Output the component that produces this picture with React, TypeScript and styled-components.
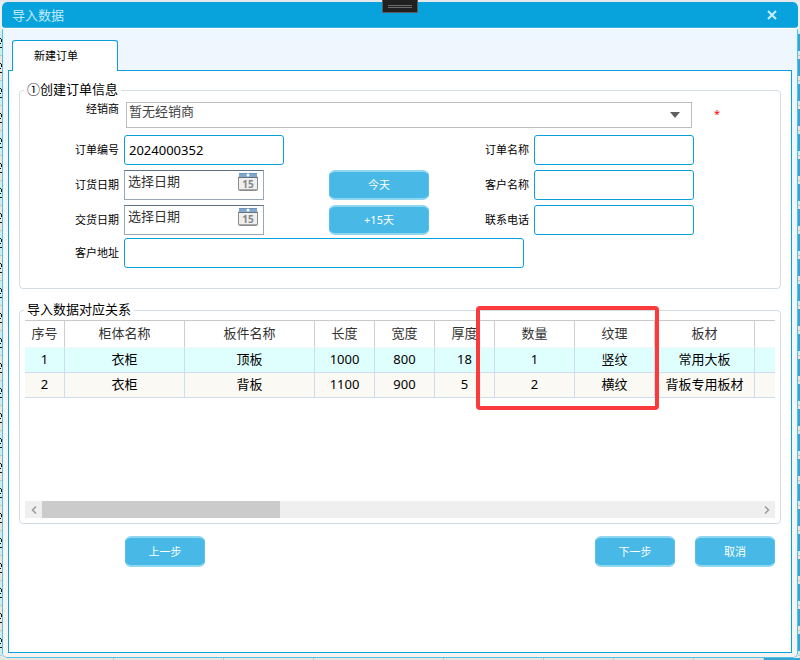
import React from "react";
import styled, { createGlobalStyle } from "styled-components";

const GlobalStyle = createGlobalStyle`
  *, *::before, *::after { box-sizing: border-box; }
  body {
    margin: 0;
    background: #e8e4dc;
    color: #000;
    font-family: "Noto Sans", "Noto Sans CJK SC", sans-serif;
    font-size: 13px;
  }
  button, input, select { font-family: inherit; margin: 0; }
  button { cursor: pointer; }
`;

const Desktop = styled.div`
  position: relative;
  display: grid;
  grid-template-columns: 2px minmax(0, 1fr) 2px;
  grid-template-rows: minmax(0, 1fr) 2px;
  height: 100vh;
  min-height: 600px;
  padding-top: 2px;
  background: #e6e8ec;
  overflow: hidden;
`;

const EdgeStrip = styled.div`
  padding-top: 29px;
  overflow: hidden;
  background: #f0eff0;
`;

const EdgeRow = styled.div<{ $tinted: boolean }>`
  display: flex;
  height: 25px;
  overflow: hidden;
  border-bottom: 1px solid #c4c6c6;
  background: ${(p) => (p.$tinted ? "#cdeeee" : "#ece6dc")};
`;

const EdgeMark = styled.svg`
  display: block;
  margin-top: 7px;
`;

const EdgeBlock = styled.span`
  width: 100%;
  height: 17px;
  margin-top: 3px;
  background: #35a5d5;
`;

const BottomStrip = styled.div`
  grid-column: 1 / -1;
  display: grid;
  grid-template-columns: 114fr 110fr 90fr 130fr 100fr 70fr 80fr 70fr 36fr;
  background: #e9e5dc;
`;

const BottomCell = styled.span`
  border-right: 1px solid #c6c4c4;
  &:last-child { border: 0; background: #35a5d5; }
`;

const DockHandle = styled.div`
  position: absolute;
  top: 0;
  left: calc(50% - 18px);
  width: 36px;
  height: 13px;
  padding: 5px;
  border: 1px solid #5c5c5c;
  border-top: 0;
  background: #202020;

  &::before {
    content: "";
    display: block;
    height: 3px;
    border: 1px solid #6b6b6b;
    border-width: 1px 0;
  }
`;

const Window = styled.main`
  display: flex;
  flex-direction: column;
  min-width: 0;
  border-radius: 5px;
  overflow: hidden;
  background: #fff;
`;

const TitleBar = styled.header`
  display: flex;
  align-items: center;
  justify-content: space-between;
  height: 26px;
  flex: none;
  padding: 0 20px 0 10px;
  border-bottom: 1px solid #3cb5e1;
  border-radius: 5px 5px 3px 3px;
  background: #08a3dc;
  color: #c3ecfb;
`;

const Title = styled.h1`
  margin: 0;
  font-size: 13px;
  font-weight: 400;
  line-height: 24px;
`;

const CloseButton = styled.button`
  display: flex;
  padding: 0;
  border: 0;
  background: none;
  color: #c9eefb;
`;

const WindowBody = styled.div`
  display: flex;
  flex: 1;
  flex-direction: column;
  min-height: 0;
  margin-top: 1px;
  padding: 11px 5px 4px;
  border: 1px solid #55bfe6;
  border-top: 0;
  border-radius: 0 0 5px 5px;
  background: linear-gradient(#eef6ff, #f4f6f8 50%, #f5f4f1);
`;

const TabList = styled.div`
  display: flex;
  padding-left: 4px;
`;

const Tab = styled.button`
  position: relative;
  height: 31px;
  margin-bottom: -1px;
  padding: 0 39px 0 21px;
  border: 1px solid #0aa0da;
  border-bottom: 0;
  border-radius: 3px 3px 0 0;
  background: #fff;
  color: #000;
  font-size: 11px;
  line-height: 30px;
`;

const TabPanel = styled.section`
  display: flex;
  flex: 1;
  flex-direction: column;
  gap: 12px;
  min-height: 0;
  padding: 10px;
  border: 1px solid #0aa0da;
  background: #fff;
`;

const Group = styled.fieldset`
  position: relative;
  min-width: 0;
  margin: 0;
  padding: 0;
  border: 1px solid #d3dde6;
  border-radius: 4px;
`;

const Legend = styled.legend`
  height: 18px;
  margin-left: 4px;
  padding: 0 3px;
  font-size: 13px;
  line-height: 16px;
`;

const FormGrid = styled.div`
  display: grid;
  grid-template-columns: 99px minmax(0, 200fr) 100px 95px minmax(0, 160fr) 81px;
  grid-template-rows: 33px 35px 35px 33px 30px;
  column-gap: 5px;
  align-items: start;
  padding: 3px 0 20px;
`;

const FieldLabel = styled.label<{ $col: number; $compact?: boolean }>`
  grid-column: ${(p) => p.$col};
  font-size: 11px;
  line-height: ${(p) => (p.$compact ? 14 : 30)}px;
  text-align: right;
  white-space: nowrap;
`;

const TextInput = styled.input<{ $cols?: string; $width?: string }>`
  grid-column: ${(p) => p.$cols ?? "auto"};
  width: ${(p) => p.$width ?? "100%"};
  height: 30px;
  padding: 0 4px;
  border: 1px solid #0aa0da;
  border-radius: 3px;
  outline: 0;
  background: #fff;
  color: #000;
  font-size: 13px;
`;

const SelectBox = styled.div`
  position: relative;
  grid-column: 2 / 6;
  margin: 0 2px;
`;

const Select = styled.select`
  display: block;
  width: 100%;
  height: 26px;
  padding: 0 30px 8px 2px;
  border: 1px solid #bdbdbd;
  border-radius: 0;
  outline: 0;
  appearance: none;
  background: #fff;
  color: #444;
  font-size: 13px;
  line-height: 16px;
`;

const SelectArrow = styled.svg`
  position: absolute;
  top: 10px;
  right: 12px;
  pointer-events: none;
`;

const Required = styled.span`
  padding-left: 15px;
  color: #f00;
  font-size: 11px;
  line-height: 24px;
`;

const DateBox = styled.div`
  display: flex;
  align-items: flex-start;
  width: 70%;
  height: 30px;
  padding: 1px 5px 0 3px;
  border: 1px solid #9aa7b4;
  border-top-color: #5f7182;
  background: #fff;
`;

const DateInput = styled.input`
  flex: 1;
  min-width: 0;
  height: 18px;
  padding: 0;
  border: 0;
  outline: 0;
  background: none;
  color: #333;
  font-size: 13px;
  &::placeholder { color: #333; opacity: 1; }
`;

const CalendarButton = styled.button`
  display: flex;
  padding: 0;
  border: 0;
  background: none;
`;

const ActionButton = styled.button<{ $wide?: boolean }>`
  width: ${(p) => (p.$wide ? 100 : 80)}px;
  height: ${(p) => (p.$wide ? 30 : 31)}px;
  padding: 0;
  border: 1px solid #6fcaec;
  border-width: 2px 1px;
  border-color: #8fd6f1 #58bfe8;
  border-radius: 6px;
  background: #48b9e7;
  color: #fff;
  font-size: 11px;
  line-height: 26px;
`;

const TableView = styled.div`
  min-height: 181px;
  margin: 1px 5px 0;
  overflow: hidden;
`;

const Table = styled.table`
  width: 100%;
  table-layout: fixed;
  border-collapse: separate;
  border-spacing: 0;
  font-size: 13px;
  text-align: center;
`;

const HeadCell = styled.th`
  height: 28px;
  padding: 0;
  border-top: 1px solid #c9c9c9;
  border-right: 1px solid #cfcfcf;
  border-bottom: 1px solid #f0f8f8;
  color: #333;
  font-weight: 400;
  line-height: 24px;
  vertical-align: top;
  white-space: nowrap;
  &:last-child { border-right: 0; }
`;

const BodyRow = styled.tr<{ $selected: boolean }>`
  background: ${(p) => (p.$selected ? "#dfffff" : "#fbf9f3")};
`;

const BodyCell = styled.td`
  height: 25px;
  padding: 0;
  border-right: 1px solid #cfdcee;
  border-bottom: 1px solid #cfdcee;
  line-height: 22px;
  vertical-align: top;
  white-space: nowrap;
  &:last-child { border-right: 0; }
`;

const ScrollBar = styled.div`
  display: flex;
  height: 17px;
  margin: 0 5px 5px;
  background: #efefef;
`;

const ScrollButton = styled.button`
  display: flex;
  align-items: center;
  justify-content: center;
  width: 17px;
  padding: 0;
  border: 0;
  background: none;
  color: #999;
`;

const ScrollTrack = styled.div`
  flex: 1;
`;

const ScrollThumb = styled.div`
  width: 33.3%;
  height: 100%;
  background: #cbcbcb;
`;

const Highlight = styled.div`
  position: absolute;
  top: -13px;
  left: 60%;
  width: 183px;
  height: 104px;
  border: 4px solid #fb3a3c;
  border-radius: 4px;
  pointer-events: none;
`;

const Footer = styled.footer`
  display: flex;
  gap: 20px;
  padding: 0 6px 0 106px;
`;

const Spacer = styled.span`
  flex: 1;
`;

const CalendarIcon = () => (
  <svg width="20" height="19" viewBox="0 0 20 19" aria-hidden="true">
    <rect x="0.5" y="4.5" width="19" height="14" rx="1" fill="#efefef" stroke="#8b8b8b" />
    <path d="M1 17.5h18" stroke="#a8a8a8" />
    <rect x="1" y="1" width="18" height="4" fill="#7fa9d1" />
    <path d="M0.5 5.5h19" stroke="#6c7378" />
    <path d="M1 1.5h18" stroke="#6d94b8" />
    <circle cx="10" cy="3" r="1.5" fill="#fff" />
    <text x="10" y="16" textAnchor="middle" fontFamily="Noto Sans" fontWeight="700" fontSize="10" fill="#858585">15</text>
  </svg>
);

const COLUMNS = [
  { title: "序号", width: 40 },
  { title: "柜体名称", width: 120 },
  { title: "板件名称", width: 130 },
  { title: "长度", width: 60 },
  { title: "宽度", width: 60 },
  { title: "厚度", width: 60 },
  { title: "数量", width: 80 },
  { title: "纹理", width: 80 },
  { title: "板材", width: 100 },
  { title: "", width: 20 },
];

const ROWS = [
  ["1", "衣柜", "顶板", "1000", "800", "18", "1", "竖纹", "常用大板", ""],
  ["2", "衣柜", "背板", "1100", "900", "5", "2", "横纹", "背板专用板材", ""],
];

const EDGE_ROWS = Array.from({ length: 40 }, (_, i) => i);

function DateField({ id, label }: { id: string; label: string }) {
  return (
    <>
      <FieldLabel $col={1} htmlFor={id}>{label}</FieldLabel>
      <DateBox>
        <DateInput id={id} placeholder="选择日期" />
        <CalendarButton type="button" aria-label={label}><CalendarIcon /></CalendarButton>
      </DateBox>
    </>
  );
}

export default function App() {
  return (
    <>
      <GlobalStyle />
      <Desktop>
        <EdgeStrip aria-hidden="true">
          {EDGE_ROWS.map((i) => (
            <EdgeRow key={i} $tinted={i % 2 === 0}>
              <EdgeMark width="2" height="10" viewBox="0 0 2 10">
                <path d="M0 0.5h1M1.5 1v3M0 5.5h1M0 9.5h2" fill="none" stroke="#111" />
              </EdgeMark>
            </EdgeRow>
          ))}
        </EdgeStrip>

        <Window>
          <TitleBar>
            <Title>导入数据</Title>
            <CloseButton type="button" aria-label="关闭">
              <svg width="12" height="10" viewBox="0 0 12 10" aria-hidden="true">
                <path d="M2 1l8 8M10 1L2 9" stroke="currentColor" strokeWidth="2" />
              </svg>
            </CloseButton>
          </TitleBar>

          <WindowBody>
            <TabList role="tablist">
              <Tab type="button" role="tab" aria-selected="true">新建订单</Tab>
            </TabList>

            <TabPanel role="tabpanel">
              <Group>
                <Legend>①创建订单信息</Legend>
                <FormGrid>
                  <FieldLabel $col={1} $compact htmlFor="dealer">经销商</FieldLabel>
                  <SelectBox>
                    <Select id="dealer" defaultValue="none">
                      <option value="none">暂无经销商</option>
                    </Select>
                    <SelectArrow width="10" height="6" viewBox="0 0 10 6" aria-hidden="true">
                      <path d="M0 0h10L5 6z" fill="#606060" />
                    </SelectArrow>
                  </SelectBox>
                  <Required>*</Required>

                  <FieldLabel $col={1} htmlFor="orderNo">订单编号</FieldLabel>
                  <TextInput id="orderNo" $width="80%" defaultValue="2024000352" />
                  <FieldLabel $col={4} htmlFor="orderName">订单名称</FieldLabel>
                  <TextInput id="orderName" />

                  <DateField id="orderDate" label="订货日期" />
                  <ActionButton type="button" $wide>今天</ActionButton>
                  <FieldLabel $col={4} htmlFor="customer">客户名称</FieldLabel>
                  <TextInput id="customer" />

                  <DateField id="deliveryDate" label="交货日期" />
                  <ActionButton type="button" $wide>+15天</ActionButton>
                  <FieldLabel $col={4} htmlFor="phone">联系电话</FieldLabel>
                  <TextInput id="phone" />

                  <FieldLabel $col={1} htmlFor="address">客户地址</FieldLabel>
                  <TextInput id="address" $cols="2 / 5" $width="calc(100% - 5px)" />
                </FormGrid>
              </Group>

              <Group>
                <Legend>导入数据对应关系</Legend>
                <TableView>
                  <Table>
                    <colgroup>
                      {COLUMNS.map((c, i) => <col key={i} style={{ width: `${c.width / 7.5}%` }} />)}
                    </colgroup>
                    <thead>
                      <tr>{COLUMNS.map((c, i) => <HeadCell key={i}>{c.title}</HeadCell>)}</tr>
                    </thead>
                    <tbody>
                      {ROWS.map((row, r) => (
                        <BodyRow key={r} $selected={r === 0}>
                          {row.map((cell, i) => <BodyCell key={i}>{cell}</BodyCell>)}
                        </BodyRow>
                      ))}
                    </tbody>
                  </Table>
                </TableView>
                <ScrollBar>
                  <ScrollButton type="button" aria-label="向左滚动">
                    <svg width="6" height="8" viewBox="0 0 6 8" aria-hidden="true">
                      <path d="M5 0.5L1.5 4 5 7.5" fill="none" stroke="currentColor" strokeWidth="1.5" />
                    </svg>
                  </ScrollButton>
                  <ScrollTrack><ScrollThumb /></ScrollTrack>
                  <ScrollButton type="button" aria-label="向右滚动">
                    <svg width="6" height="8" viewBox="0 0 6 8" aria-hidden="true">
                      <path d="M1 0.5L4.5 4 1 7.5" fill="none" stroke="currentColor" strokeWidth="1.5" />
                    </svg>
                  </ScrollButton>
                </ScrollBar>
                <Highlight />
              </Group>

              <Footer>
                <ActionButton type="button">上一步</ActionButton>
                <Spacer />
                <ActionButton type="button">下一步</ActionButton>
                <ActionButton type="button">取消</ActionButton>
              </Footer>
            </TabPanel>
          </WindowBody>
        </Window>

        <EdgeStrip aria-hidden="true">
          {EDGE_ROWS.map((i) => <EdgeRow key={i} $tinted={i % 2 === 0}><EdgeBlock /></EdgeRow>)}
        </EdgeStrip>

        <BottomStrip aria-hidden="true">
          {Array.from({ length: 9 }, (_, i) => <BottomCell key={i} />)}
        </BottomStrip>
        <DockHandle />
      </Desktop>
    </>
  );
}
